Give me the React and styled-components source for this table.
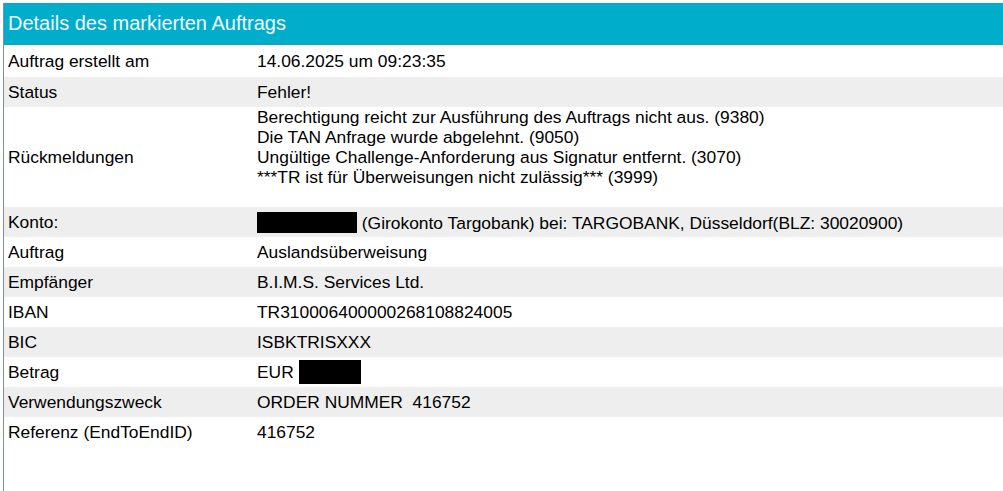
import React from "react";
import styled, { createGlobalStyle } from "styled-components";

const GlobalStyle = createGlobalStyle`
  html, body {
    margin: 0;
    padding: 0;
    background: #ffffff;
  }
  body {
    font-family: "Liberation Sans", Arial, sans-serif;
    color: #000000;
  }
`;

const rows = [
  { label: "Auftrag erstellt am", value: "14.06.2025 um 09:23:35", tall: true },
  { label: "Status", value: "Fehler!" },
  {
    label: "Rückmeldungen",
    lines: [
      "Berechtigung reicht zur Ausführung des Auftrags nicht aus. (9380)",
      "Die TAN Anfrage wurde abgelehnt. (9050)",
      "Ungültige Challenge-Anforderung aus Signatur entfernt. (3070)",
      "***TR ist für Überweisungen nicht zulässig*** (3999)",
      "",
    ],
  },
  {
    label: "Konto:",
    redact: 100,
    value: " (Girokonto Targobank) bei: TARGOBANK, Düsseldorf(BLZ: 30020900)",
  },
  { label: "Auftrag", value: "Auslandsüberweisung" },
  { label: "Empfänger", value: "B.I.M.S. Services Ltd." },
  { label: "IBAN", value: "TR310006400000268108824005" },
  { label: "BIC", value: "ISBKTRISXXX" },
  { label: "Betrag", value: "EUR ", redactAfter: 62 },
  { label: "Verwendungszweck", value: "ORDER NUMMER\u00a0 416752" },
  { label: "Referenz (EndToEndID)", value: "416752" },
];

const App = () => {
  return (
    <>
      <GlobalStyle />
      <Panel>
        <Header>Details des markierten Auftrags</Header>
        <Table>
          {rows.map((row, i) => (
            <Row key={row.label} $striped={i % 2 === 1} $tall={row.tall}>
              <Label>{row.label}</Label>
              <Value>
                {row.lines
                  ? row.lines.map((line, j) => <Line key={j}>{line || "\u00a0"}</Line>)
                  : (
                    <>
                      {row.redact && <Redacted $w={row.redact} />}
                      {row.value}
                      {row.redactAfter && <Redacted $w={row.redactAfter} $tall />}
                    </>
                  )}
              </Value>
            </Row>
          ))}
        </Table>
      </Panel>
    </>
  );
};

const Panel = styled.div`
  margin: 3px 0 0 3px;
  height: 488px;
  border-left: 1px solid #7d8fa0;
  box-sizing: border-box;
`;

const Header = styled.div`
  height: 42px;
  display: flex;
  align-items: center;
  padding-left: 4px;
  background: #00adcb;
  border-bottom: 1px solid #1f9db5;
  box-sizing: border-box;
  color: #f2fbfd;
  font-size: 20px;
`;

const Table = styled.div`
  display: flex;
  flex-direction: column;
`;

const Row = styled.div`
  display: grid;
  grid-template-columns: 253px 1fr;
  align-items: center;
  min-height: ${(p) => (p.$tall ? 32 : 30)}px;
  background: ${(p) => (p.$striped ? "#eeeeee" : "#ffffff")};
  font-size: 17.4px;
`;

const Label = styled.div`
  padding-left: 4px;
`;

const Value = styled.div`
  white-space: pre;
  line-height: 20px;
`;

const Line = styled.div`
  line-height: 20px;
`;

const Redacted = styled.span`
  display: inline-block;
  width: ${(p) => p.$w}px;
  height: ${(p) => (p.$tall ? 24 : 21)}px;
  background: #000000;
  vertical-align: ${(p) => (p.$tall ? "-6px" : "-4px")};
`;

export default App;
